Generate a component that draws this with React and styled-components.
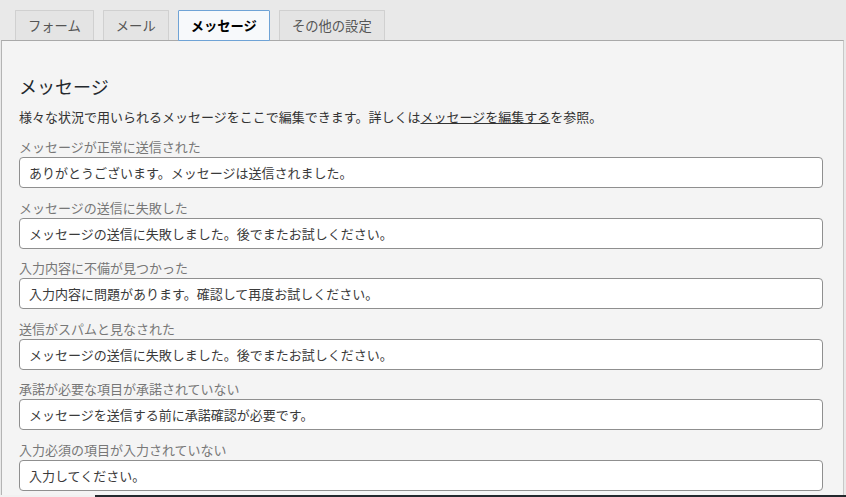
import React from "react";
import styled, { createGlobalStyle } from "styled-components";

const Global = createGlobalStyle`
  html, body { margin: 0; padding: 0; }
  body {
    background: #e9e9e9;
    font-family: "Noto Sans CJK JP", "Noto Sans", "Liberation Sans", sans-serif;
    color: #333;
  }
`;

const Page = styled.div`
  width: 846px;
  height: 497px;
  display: flex;
  flex-direction: column;
  overflow: hidden;
`;

const TabBar = styled.div`
  height: 40px;
  box-sizing: border-box;
  padding: 10px 0 0 15px;
  display: flex;
  align-items: flex-end;
  gap: 9px;
`;

const Tab = styled.div`
  height: ${(p) => (p.$active ? "31px" : "30px")};
  box-sizing: border-box;
  padding: 0 12px;
  display: flex;
  align-items: center;
  font-size: 13.3px;
  line-height: 1;
  margin-bottom: ${(p) => (p.$active ? "-1px" : "0")};
  position: relative;
  z-index: ${(p) => (p.$active ? 2 : 0)};
  background: ${(p) => (p.$active ? "#f7f9fb" : "#e4e4e4")};
  color: ${(p) => (p.$active ? "#000" : "#555")};
  font-weight: ${(p) => (p.$active ? 700 : 400)};
  border: 1px solid ${(p) => (p.$active ? "#6fa3d6" : "#d0d0d0")};
  border-bottom: ${(p) => (p.$active ? "1px solid #6fa3d6" : "none")};
  border-radius: 1px 1px 0 0;
`;

const Panel = styled.div`
  margin: 0 2px 0 1px;
  flex: 1;
  background: #f4f4f4;
  border-top: 1px solid #a9a9a9;
  border-left: 1px solid #b4b4b4;
  border-right: 1px solid #c8c8c8;
  padding: 33px 20px 0 17px;
  display: flex;
  flex-direction: column;
  min-height: 0;
`;

const Heading = styled.h2`
  margin: 0;
  font-size: 18px;
  line-height: 24px;
  font-weight: 400;
  color: #23282d;
`;

const Description = styled.p`
  margin: 10px 0 0;
  font-size: 13px;
  line-height: 18px;
  color: #333;
`;

const Link = styled.a`
  color: #333;
  text-decoration: underline;
`;

const FieldList = styled.div`
  margin-top: 12px;
  display: flex;
  flex-direction: column;
  gap: 10.6px;
`;

const Field = styled.div`
  display: flex;
  flex-direction: column;
  gap: 2px;
`;

const Label = styled.label`
  font-size: 13px;
  line-height: 17px;
  color: #777;
`;

const Input = styled.div`
  height: 31px;
  box-sizing: border-box;
  border: 1px solid #8f8f8f;
  border-radius: 4px;
  background: #fff;
  padding: 0 9px;
  display: flex;
  align-items: center;
  font-size: 13px;
  color: #3a3a3a;
`;

const Footer = styled.div`
  height: 2px;
  display: flex;
  flex-shrink: 0;
`;

const FooterGap = styled.div`
  width: 95px;
  background: #f1f1f1;
`;

const FooterBar = styled.div`
  flex: 1;
  background: #23282d;
`;

const fields = [
  ["メッセージが正常に送信された", "ありがとうございます。メッセージは送信されました。"],
  ["メッセージの送信に失敗した", "メッセージの送信に失敗しました。後でまたお試しください。"],
  ["入力内容に不備が見つかった", "入力内容に問題があります。確認して再度お試しください。"],
  ["送信がスパムと見なされた", "メッセージの送信に失敗しました。後でまたお試しください。"],
  ["承諾が必要な項目が承諾されていない", "メッセージを送信する前に承諾確認が必要です。"],
  ["入力必須の項目が入力されていない", "入力してください。"],
];

export default function App() {
  return (
    <Page>
      <Global />
      <TabBar>
        <Tab>フォーム</Tab>
        <Tab>メール</Tab>
        <Tab $active>メッセージ</Tab>
        <Tab>その他の設定</Tab>
      </TabBar>
      <Panel>
        <Heading>メッセージ</Heading>
        <Description>
          様々な状況で用いられるメッセージをここで編集できます。詳しくは
          <Link>メッセージを編集する</Link>を参照。
        </Description>
        <FieldList>
          {fields.map(([label, value]) => (
            <Field key={label}>
              <Label>{label}</Label>
              <Input>{value}</Input>
            </Field>
          ))}
        </FieldList>
      </Panel>
      <Footer>
        <FooterGap />
        <FooterBar />
      </Footer>
    </Page>
  );
}
